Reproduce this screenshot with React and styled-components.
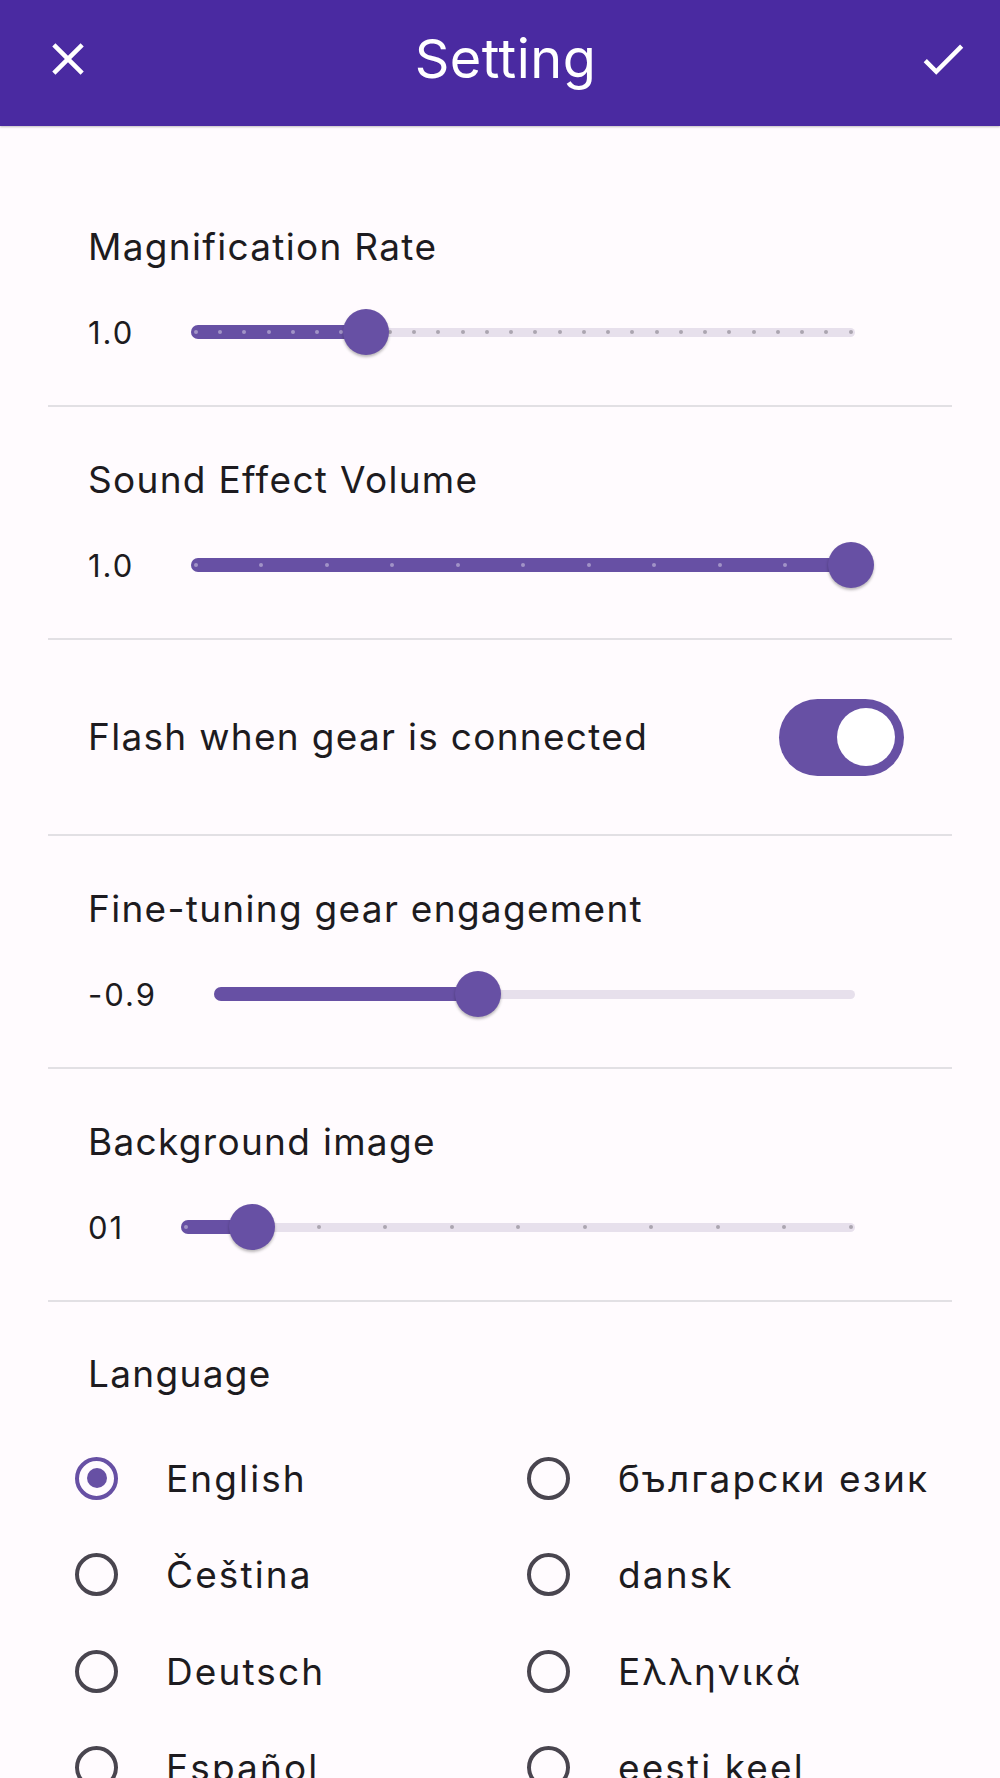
import React, { useState } from "react";
import styled, { createGlobalStyle } from "styled-components";
import { MdClose, MdCheck } from "react-icons/md";

const GlobalStyle = createGlobalStyle`
  html, body {
    margin: 0;
    padding: 0;
    background: #fffbfe;
    overflow: hidden;
  }
  body {
    font-family: Inter, "Noto Sans", sans-serif;
    color: #1d1b20;
  }
  * {
    box-sizing: border-box;
  }
`;

const Page = styled.div`
  height: 100vh;
  overflow: hidden;
  display: flex;
  flex-direction: column;
  background: #fffbfe;
`;

const AppBar = styled.header`
  flex: none;
  height: 126px;
  display: grid;
  grid-template-columns: 1fr auto 1fr;
  align-items: center;
  padding: 0 30px 8px 41px;
  background: #4a2aa1;
  box-shadow: 0 1px 2px rgba(0, 0, 0, 0.25);
  position: relative;
  z-index: 1;
`;

const IconButton = styled.button`
  justify-self: ${(p) => (p.$end ? "end" : "start")};
  display: flex;
  padding: 0;
  border: 0;
  background: none;
  color: #ffffff;
  cursor: pointer;
`;

const Title = styled.h1`
  margin: 0;
  font-size: 54px;
  line-height: 64px;
  font-weight: 400;
  letter-spacing: 0.5px;
  color: #ffffff;
`;

const List = styled.main`
  padding: 48px 48px 0;
`;

const Section = styled.section`
  padding: 50px 97px 25px 40px;
  border-bottom: 2px solid #e2e0e4;
`;

const ToggleSection = styled.section`
  height: 196px;
  display: flex;
  align-items: center;
  justify-content: space-between;
  padding: 0 48px 0 40px;
  border-bottom: 2px solid #e2e0e4;
`;

const Label = styled.div`
  font-size: 37px;
  line-height: 46px;
  letter-spacing: 1.3px;
`;

const SliderRow = styled.div`
  margin-top: 14px;
  height: 96px;
  display: flex;
  align-items: center;
`;

const Value = styled.span`
  flex: none;
  font-size: 31px;
  letter-spacing: 2px;
`;

const TrackArea = styled.div`
  flex: 1;
  margin-left: 57px;
  position: relative;
  height: 9px;
  border-radius: 4.5px;
  background: #e7e0ec;
`;

const ActiveTrack = styled.div`
  position: absolute;
  left: 0;
  top: -2.5px;
  height: 14px;
  border-radius: 7px;
  background: #6750a4;
`;

const Tick = styled.span`
  position: absolute;
  top: 2.5px;
  width: 4px;
  height: 4px;
  margin-left: -2px;
  border-radius: 50%;
  background: ${(p) => (p.$active ? "#a193c7" : "#aba5b0")};
`;

const Thumb = styled.span`
  position: absolute;
  top: 50%;
  width: 46px;
  height: 46px;
  margin: -23px 0 0 -23px;
  border-radius: 50%;
  background: #6750a4;
  box-shadow: 0 2px 3px rgba(0, 0, 0, 0.28);
`;

const SwitchTrack = styled.button`
  width: 125px;
  height: 77px;
  padding: 0 9.5px;
  border: 0;
  border-radius: 38.5px;
  display: flex;
  align-items: center;
  justify-content: ${(p) => (p.$on ? "flex-end" : "flex-start")};
  background: ${(p) => (p.$on ? "#6750a4" : "#e7e0ec")};
  cursor: pointer;
`;

const SwitchThumb = styled.span`
  width: 58px;
  height: 58px;
  border-radius: 50%;
  background: #ffffff;
`;

const LangSection = styled.section`
  padding: 49px 0 0;
`;

const LangLabel = styled(Label)`
  padding-left: 40px;
`;

const LangGrid = styled.div`
  margin-top: 33px;
  display: grid;
  grid-template-columns: 1fr 1fr;
  grid-auto-rows: 96.5px;
`;

const LangItem = styled.label`
  display: flex;
  align-items: center;
  gap: 48px;
  padding-left: 27px;
  font-size: 37px;
  letter-spacing: 2.1px;
  white-space: nowrap;
  cursor: pointer;
`;

const RadioRing = styled.span`
  flex: none;
  width: 43px;
  height: 43px;
  border-radius: 50%;
  border: 4.5px solid ${(p) => (p.$checked ? "#6750a4" : "#49454f")};
  display: flex;
  align-items: center;
  justify-content: center;

  &::after {
    content: "";
    width: 20px;
    height: 20px;
    border-radius: 50%;
    background: #6750a4;
    display: ${(p) => (p.$checked ? "block" : "none")};
  }
`;

// 트랙 위 위치: 양 끝 4.5px 안쪽에서 시작
const pos = (f) => `calc(4.5px + (100% - 9px) * ${f})`;

function Slider({ value, fraction, divisions }) {
  const ticks = divisions ? Array.from({ length: divisions + 1 }, (_, i) => i / divisions) : [];
  return (
    <SliderRow>
      <Value>{value}</Value>
      <TrackArea>
        <ActiveTrack style={{ width: pos(fraction) }} />
        {ticks.map((t, i) => (
          <Tick key={i} $active={t <= fraction} style={{ left: pos(t) }} />
        ))}
        <Thumb style={{ left: pos(fraction) }} />
      </TrackArea>
    </SliderRow>
  );
}

const languages = [
  "English",
  "български език",
  "Čeština",
  "dansk",
  "Deutsch",
  "Ελληνικά",
  "Español",
  "eesti keel",
  "suomi",
  "Français",
];

export default function App() {
  const [flash, setFlash] = useState(true);
  const [lang, setLang] = useState("English");

  return (
    <>
      <GlobalStyle />
      <Page>
        <AppBar>
          <IconButton aria-label="close">
            <MdClose size={54} />
          </IconButton>
          <Title>Setting</Title>
          <IconButton $end aria-label="save">
            <MdCheck size={54} />
          </IconButton>
        </AppBar>

        <List>
          <Section>
            <Label>Magnification Rate</Label>
            <Slider value="1.0" fraction={7 / 27} divisions={27} />
          </Section>

          <Section>
            <Label>Sound Effect Volume</Label>
            <Slider value="1.0" fraction={1} divisions={10} />
          </Section>

          <ToggleSection>
            <Label>Flash when gear is connected</Label>
            <SwitchTrack $on={flash} onClick={() => setFlash(!flash)}>
              <SwitchThumb />
            </SwitchTrack>
          </ToggleSection>

          <Section>
            <Label>Fine-tuning gear engagement</Label>
            <Slider value="-0.9" fraction={0.41} />
          </Section>

          <Section>
            <Label>Background image</Label>
            <Slider value="01" fraction={0.1} divisions={10} />
          </Section>

          <LangSection>
            <LangLabel>Language</LangLabel>
            <LangGrid>
              {languages.map((item) => (
                <LangItem key={item} onClick={() => setLang(item)}>
                  <RadioRing $checked={lang === item} />
                  {item}
                </LangItem>
              ))}
            </LangGrid>
          </LangSection>
        </List>
      </Page>
    </>
  );
}
